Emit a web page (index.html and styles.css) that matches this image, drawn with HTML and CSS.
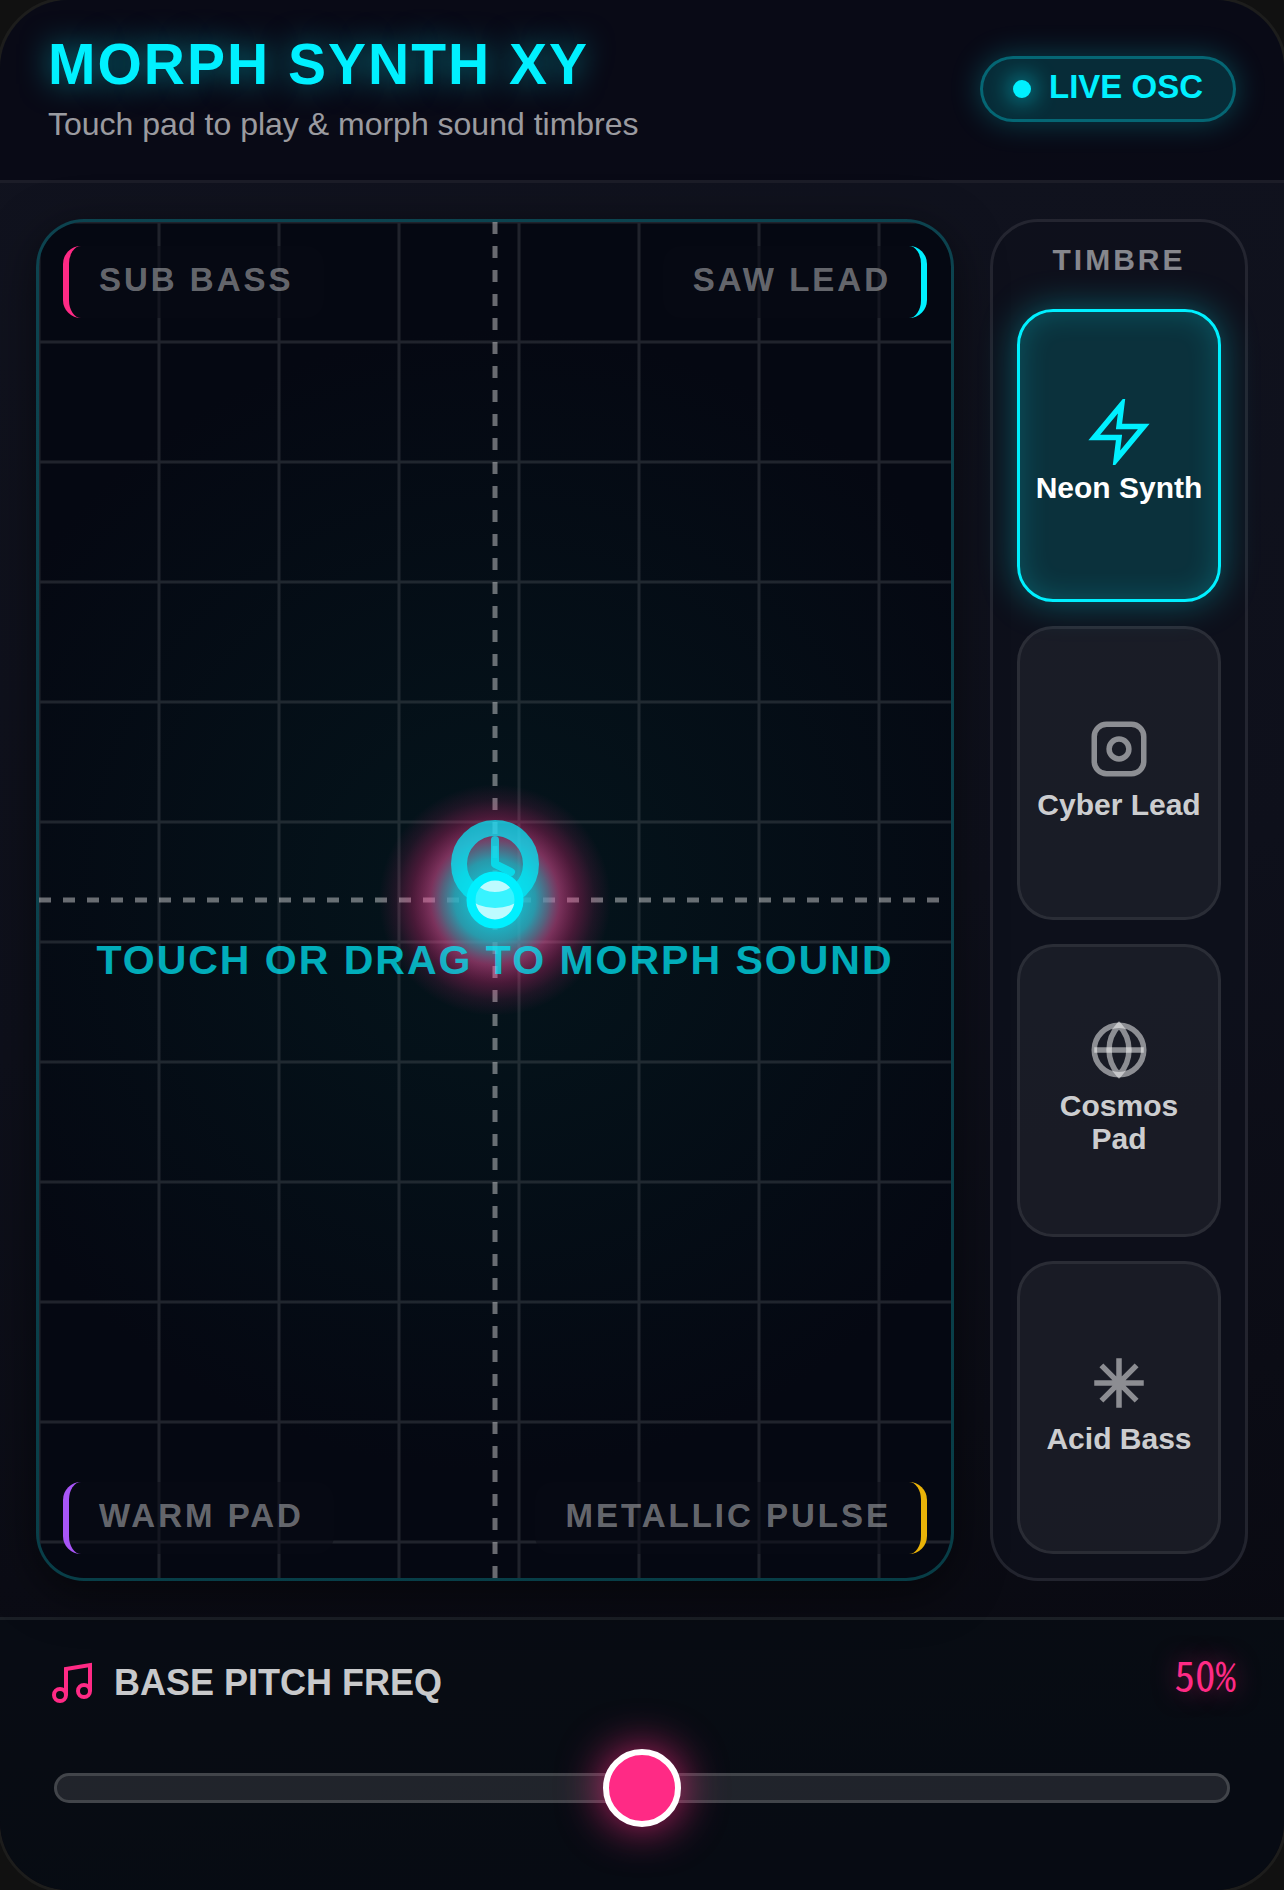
FILE: index.html
```html
<!DOCTYPE html>
<html lang="en">
<head>
    <meta charset="UTF-8">
    <meta name="viewport" content="width=device-width, initial-scale=1.0">
    <title>Morph Synth XY</title>
    <link rel="stylesheet" href="styles.css">
</head>
<body>
    <div class="synth">
        <header class="header">
            <div class="brand">
                <h1 class="title">MORPH SYNTH XY</h1>
                <p class="subtitle">Touch pad to play &amp; morph sound timbres</p>
            </div>
            <div class="badge">
                <span class="badge-dot"></span>
                <span class="badge-text">LIVE OSC</span>
            </div>
        </header>

        <main class="main">
            <section class="pad" aria-label="XY pad">
                <svg class="pad-canvas" width="100%" height="100%" aria-hidden="true">
                    <defs>
                        <pattern id="grid" width="120" height="120" patternUnits="userSpaceOnUse">
                            <path d="M0 0H120V120H0Z" fill="none" stroke="#fff" stroke-opacity="0.11" stroke-width="3"/>
                        </pattern>
                        <radialGradient id="glow">
                            <stop offset="0" stop-color="#00f0ff" stop-opacity="0.95"/>
                            <stop offset="0.35" stop-color="#2fb0c4" stop-opacity="0.85"/>
                            <stop offset="0.46" stop-color="#7884a8" stop-opacity="0.7"/>
                            <stop offset="0.56" stop-color="#f0509c" stop-opacity="0.5"/>
                            <stop offset="0.72" stop-color="#ff2a85" stop-opacity="0.27"/>
                            <stop offset="0.86" stop-color="#ff2a85" stop-opacity="0.1"/>
                            <stop offset="1" stop-color="#ff2a85" stop-opacity="0"/>
                        </radialGradient>
                    </defs>
                    <rect width="100%" height="100%" fill="url(#grid)"/>
                    <g class="crosshair">
                        <line x1="50%" y1="0" x2="50%" y2="100%"/>
                        <line x1="0" y1="50%" x2="100%" y2="50%"/>
                    </g>
                    <circle cx="50%" cy="50%" r="116" fill="url(#glow)"/>
                    <circle class="puck" cx="50%" cy="50%" r="24"/>
                </svg>

                <span class="corner corner-tl">SUB BASS</span>
                <span class="corner corner-tr">SAW LEAD</span>
                <span class="corner corner-bl">WARM PAD</span>
                <span class="corner corner-br">METALLIC PULSE</span>

                <div class="hint">
                    <svg class="hint-icon" viewBox="0 0 24 24" aria-hidden="true">
                        <circle cx="12" cy="12" r="9" stroke-width="4"/>
                        <path d="M12 6v6l4 2" stroke-width="2" stroke-linecap="round" stroke-linejoin="round"/>
                    </svg>
                    <span class="hint-text">TOUCH OR DRAG TO MORPH SOUND</span>
                </div>
            </section>

            <aside class="timbres">
                <h2 class="timbres-title">TIMBRE</h2>
                <button class="timbre active" type="button" aria-pressed="true">
                    <svg class="timbre-icon" viewBox="0 0 24 24" aria-hidden="true">
                        <polygon points="13 2 3 14 12 14 11 22 21 10 12 10 13 2"/>
                    </svg>
                    <span>Neon Synth</span>
                </button>
                <button class="timbre" type="button" aria-pressed="false">
                    <svg class="timbre-icon" viewBox="0 0 24 24" aria-hidden="true">
                        <rect x="3" y="3" width="18" height="18" rx="4.5"/>
                        <circle cx="12" cy="12" r="3.6"/>
                    </svg>
                    <span>Cyber Lead</span>
                </button>
                <button class="timbre" type="button" aria-pressed="false">
                    <svg class="timbre-icon" viewBox="0 0 24 24" aria-hidden="true">
                        <circle cx="12" cy="12" r="9"/>
                        <path d="M3 12h18"/>
                        <path d="M12 3a13 13 0 0 1 0 18a13 13 0 0 1 0-18z"/>
                    </svg>
                    <span>Cosmos Pad</span>
                </button>
                <button class="timbre" type="button" aria-pressed="false">
                    <svg class="timbre-icon" viewBox="0 0 24 24" aria-hidden="true">
                        <path d="M12 3v18M3 12h18M5.6 5.6l12.8 12.8M5.6 18.4L18.4 5.6"/>
                    </svg>
                    <span>Acid Bass</span>
                </button>
            </aside>
        </main>

        <footer class="footer">
            <div class="pitch-row">
                <label class="pitch-label" for="pitch">
                    <svg class="pitch-icon" viewBox="0 0 24 24" aria-hidden="true">
                        <path d="M9 18V5l12-2v13"/>
                        <circle cx="6" cy="18" r="3"/>
                        <circle cx="18" cy="16" r="3"/>
                    </svg>
                    BASE PITCH FREQ
                </label>
                <output class="pitch-value" for="pitch">50%</output>
            </div>
            <input class="slider" id="pitch" type="range" min="0" max="100" value="50">
        </footer>
    </div>
</body>
</html>
```

FILE: styles.css
```css
:root {
    --cyan: #00f0ff;
    --pink: #ff2a85;
    --purple: #a855f7;
    --yellow: #eab308;
}

* {
    box-sizing: border-box;
    margin: 0;
    padding: 0;
}

body {
    background: #111;
    color: #fff;
    font-family: "Liberation Sans", Arial, sans-serif;
    min-height: 100vh;
    display: flex;
    overflow: hidden;
}

/* the frame's border sits just outside the window edges */
.synth {
    flex: 1;
    display: flex;
    flex-direction: column;
    margin: -3px;
    border: 3px solid #1d1d1c;
    border-radius: 72px;
    background: linear-gradient(170deg, #11131f 0%, #0e101b 50%, #08080f 100%);
    overflow: hidden;
}

.header {
    display: flex;
    align-items: center;
    justify-content: space-between;
    padding: 34px 48px 36px;
    background: rgba(8, 9, 20, 0.8);
    border-bottom: 3px solid rgba(255, 255, 255, 0.08);
}

.title {
    font-size: 57px;
    line-height: 60px;
    letter-spacing: 2px;
    color: var(--cyan);
    text-shadow: 0 0 30px rgba(0, 240, 255, 0.5);
}

.subtitle {
    margin-top: 10px;
    font-size: 32px;
    line-height: 40px;
    color: rgba(255, 255, 255, 0.6);
}

.badge {
    display: flex;
    align-items: center;
    gap: 18px;
    height: 66px;
    padding: 0 30px;
    border: 3px solid rgba(0, 240, 255, 0.3);
    border-radius: 33px;
    background: rgba(0, 240, 255, 0.15);
    box-shadow: 0 0 30px rgba(0, 240, 255, 0.25);
    color: var(--cyan);
    font-size: 33px;
    font-weight: bold;
}

.badge-dot {
    width: 18px;
    height: 18px;
    border-radius: 50%;
    background: var(--cyan);
    box-shadow: 0 0 24px var(--cyan);
}

.badge-text {
    padding-bottom: 5px;
}

.main {
    flex: 1;
    display: flex;
    gap: 36px;
    padding: 36px;
}

/* XY pad */
.pad {
    position: relative;
    flex: 1;
    display: flex;
    align-items: center;
    justify-content: center;
    border: 3px solid rgba(0, 240, 255, 0.22);
    border-radius: 48px;
    background: radial-gradient(circle, #04151c 0%, #050812 70%);
    background-clip: padding-box;
    box-shadow: 0 12px 48px rgba(0, 0, 0, 0.5);
    overflow: hidden;
}

.pad-canvas {
    position: absolute;
    inset: 0;
}

.crosshair {
    stroke: rgba(255, 255, 255, 0.4);
    stroke-width: 5;
    stroke-dasharray: 12 12;
}

.puck {
    fill: #bdfbff;
    stroke: var(--cyan);
    stroke-width: 9;
}

.corner {
    position: absolute;
    padding: 15px 30px 20px;
    border: 0 solid;
    border-radius: 18px;
    background: rgba(7, 9, 20, 0.5);
    color: rgba(255, 255, 255, 0.4);
    font-size: 33px;
    font-weight: bold;
    line-height: 37px;
    letter-spacing: 3px;
}

.corner-tl {
    top: 24px;
    left: 24px;
    border-left: 6px solid var(--pink);
}

.corner-tr {
    top: 24px;
    right: 24px;
    border-right: 6px solid var(--cyan);
}

.corner-bl {
    bottom: 24px;
    left: 24px;
    border-left: 6px solid var(--purple);
}

.corner-br {
    bottom: 24px;
    right: 24px;
    border-right: 6px solid var(--yellow);
}

.hint {
    position: relative;
    display: flex;
    flex-direction: column;
    align-items: center;
    gap: 24px;
    color: var(--cyan);
    opacity: 0.7;
    pointer-events: none;
}

.hint-icon {
    width: 96px;
    height: 96px;
    fill: none;
    stroke: currentColor;
}

.hint-text {
    font-size: 41px;
    font-weight: bold;
    line-height: 48px;
    letter-spacing: 2px;
    white-space: nowrap;
}

/* Timbre list */
.timbres {
    width: 258px;
    display: flex;
    flex-direction: column;
    gap: 24px;
    padding: 24px;
    border: 3px solid rgba(255, 255, 255, 0.09);
    border-radius: 48px;
    background: rgba(14, 16, 28, 0.8);
}

.timbres-title {
    margin-bottom: 12px;
    font-size: 30px;
    line-height: 27px;
    letter-spacing: 3px;
    text-align: center;
    color: rgba(255, 255, 255, 0.5);
}

.timbre {
    flex: 1 1 0;
    display: flex;
    flex-direction: column;
    align-items: center;
    justify-content: center;
    gap: 6px;
    padding: 0 12px 9px;
    border: 3px solid rgba(255, 255, 255, 0.08);
    border-radius: 36px;
    background: rgba(255, 255, 255, 0.05);
    color: rgba(255, 255, 255, 0.8);
    font: bold 30px/33px "Liberation Sans", Arial, sans-serif;
    cursor: pointer;
}

.timbre-icon {
    width: 66px;
    height: 66px;
    fill: none;
    stroke: rgba(255, 255, 255, 0.5);
    stroke-width: 2;
}

.timbre.active {
    border-color: var(--cyan);
    background: rgba(0, 240, 255, 0.15);
    box-shadow: 0 0 36px rgba(0, 240, 255, 0.35), inset 0 0 30px rgba(0, 240, 255, 0.2);
    color: #fff;
}

.timbre.active .timbre-icon {
    stroke: var(--cyan);
}

/* Pitch */
.footer {
    display: flex;
    flex-direction: column;
    gap: 42px;
    padding: 39px 48px 63px;
    background: rgba(8, 12, 20, 0.8);
    border-top: 3px solid rgba(255, 255, 255, 0.08);
}

.pitch-row {
    display: flex;
    align-items: flex-start;
    justify-content: space-between;
}

.pitch-label {
    display: flex;
    align-items: center;
    gap: 18px;
    font-size: 36px;
    font-weight: bold;
    color: rgba(255, 255, 255, 0.8);
}

.pitch-icon {
    width: 48px;
    height: 48px;
    fill: none;
    stroke: var(--pink);
    stroke-width: 2;
}

.pitch-value {
    font-family: "Noto Sans Mono CJK JP", "Noto Sans Mono CJK SC", monospace;
    font-size: 41px;
    line-height: 28px;
    color: var(--pink);
    text-shadow: 0 0 24px rgba(255, 42, 133, 0.5);
}

.slider {
    appearance: none;
    -webkit-appearance: none;
    height: 78px;
    margin: 0 6px;
    background: transparent;
    cursor: pointer;
}

.slider::-webkit-slider-runnable-track {
    height: 30px;
    border: 3px solid rgba(255, 255, 255, 0.15);
    border-radius: 15px;
    background: rgba(255, 255, 255, 0.1);
}

.slider::-webkit-slider-thumb {
    -webkit-appearance: none;
    width: 78px;
    height: 78px;
    margin-top: -27px;
    border: 6px solid #fff;
    border-radius: 50%;
    background: var(--pink);
    box-shadow: 0 0 45px rgba(255, 42, 133, 0.8);
}
```
